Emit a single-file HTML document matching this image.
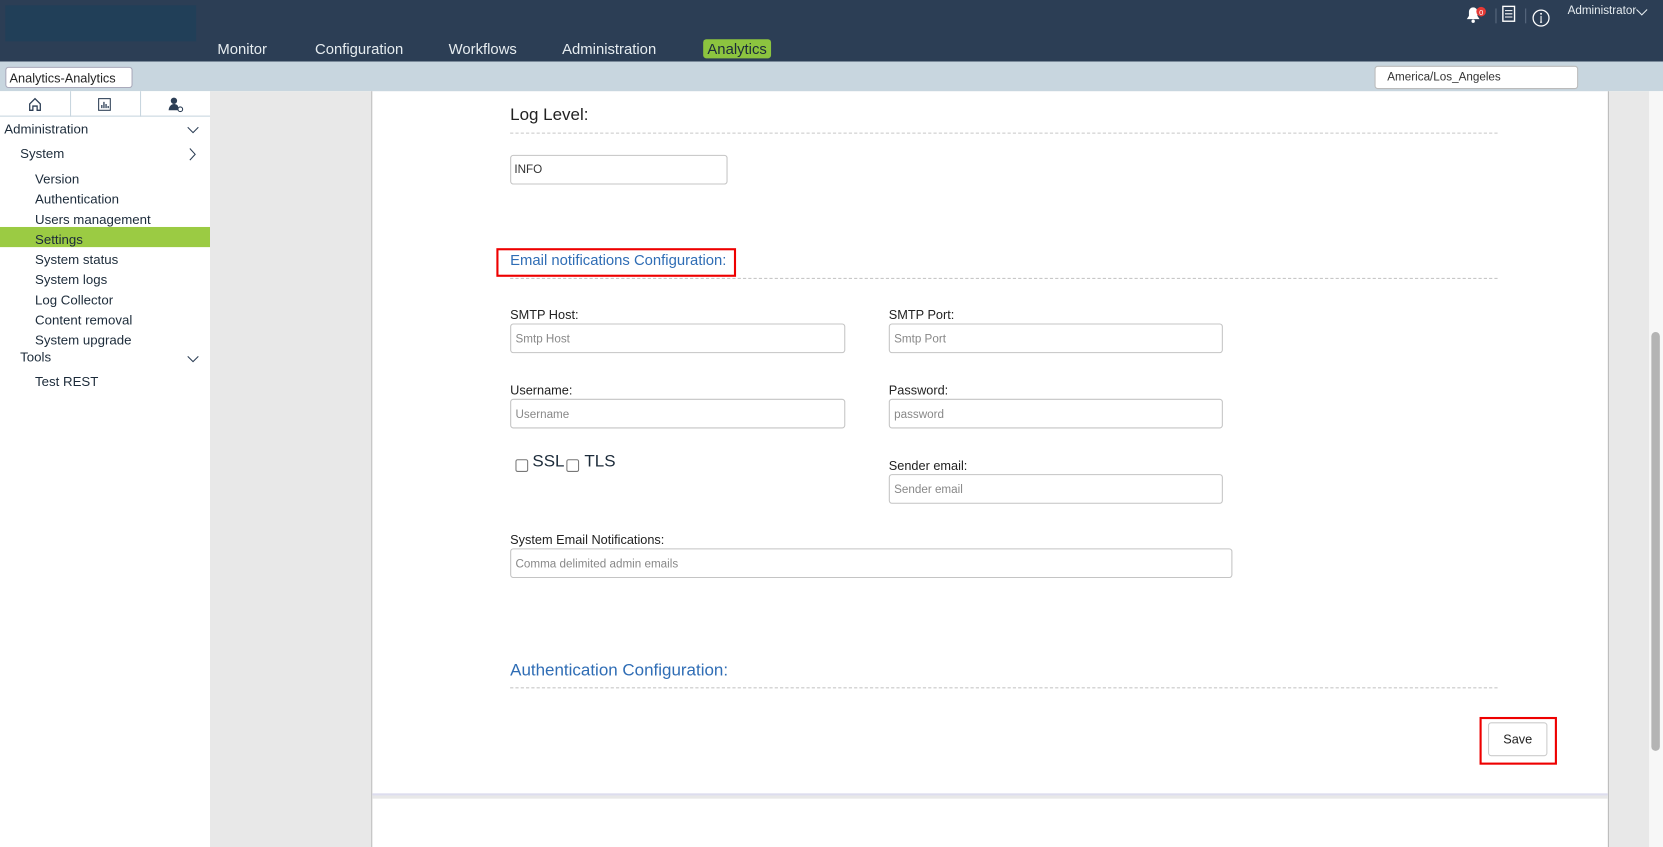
<!DOCTYPE html>
<html><head><meta charset="utf-8"><style>
*{box-sizing:border-box;margin:0;padding:0}
body{width:1663px;height:799px;overflow:hidden;background:#fff;font-family:"Liberation Sans",sans-serif;color:#222;position:relative}
#w{position:absolute;left:0;top:0;width:1568px;height:753px;transform:scale(1.0606);transform-origin:0 0}
.a{position:absolute}
.nav{color:#e6ecf0;font-size:14px;top:38px}
.side{font-size:12.5px;color:#1c2b3a}
.lbl{font-size:12px;color:#222}
.inp{position:absolute;border:1px solid #c4c4c4;border-radius:3px;height:28px;font-size:11px;color:#888;padding:8px 4px;background:#fff}
.dash{position:absolute;left:481px;width:931px;border-top:1px dashed #c8c8c8}
</style></head><body><div id="w">
<div class="a" style="left:0;top:0;width:1568px;height:58px;background:#2c3e55"></div>
<div class="a" style="left:5px;top:5px;width:180px;height:34px;background:#213f58"></div>
<div class="a nav" style="left:205px">Monitor</div>
<div class="a nav" style="left:297px">Configuration</div>
<div class="a nav" style="left:423px">Workflows</div>
<div class="a nav" style="left:530px">Administration</div>
<div class="a" style="left:663px;top:37px;width:64px;height:18px;background:#8cc43f;border-radius:3px;color:#1c2b3a;font-size:14px;text-align:center;line-height:18px">Analytics</div>
<svg class="a" style="left:1381px;top:4px" width="24" height="18"><path d="M2 14h12l-2-3V7a4 4 0 0 0-8 0v4z" fill="#fff"/><circle cx="8" cy="16" r="1.6" fill="#fff"/><circle cx="15.5" cy="7" r="4.5" fill="#e53935"/><text x="15.5" y="10" font-size="7" fill="#fff" text-anchor="middle" font-family="Liberation Sans">0</text></svg>
<div class="a" style="left:1410px;top:8px;width:1px;height:14px;background:#5a6b80"></div>
<svg class="a" style="left:1416px;top:5px" width="14" height="16"><rect x="1" y="1" width="11" height="14" fill="none" stroke="#fff" stroke-width="1.3"/><path d="M3 5h7M3 8h7M3 11h7" stroke="#fff"/></svg>
<div class="a" style="left:1438px;top:8px;width:1px;height:14px;background:#5a6b80"></div>
<svg class="a" style="left:1444px;top:8px" width="18" height="18"><circle cx="9" cy="9" r="7.5" fill="none" stroke="#fff" stroke-width="1.2"/><path d="M9 7v6M8 13h2" stroke="#fff"/><circle cx="9" cy="5" r="0.9" fill="#fff"/></svg>
<div class="a" style="left:1478px;top:4px;color:#e6ecf0;font-size:11px">Administrator</div>
<svg class="a" style="left:1542px;top:8px" width="12" height="8"><path d="M1 1l5 5 5-5" fill="none" stroke="#e6ecf0"/></svg>
<div class="a" style="left:0;top:58px;width:1568px;height:28px;background:#c8d6df"></div>
<div class="a" style="left:5px;top:63px;width:120px;height:20px;background:#fff;border:1px solid #aab;border-radius:3px;font-size:12px;padding:3px 3px;color:#222">Analytics-Analytics <span style="color:#999">&#8964;</span></div>
<div class="a" style="left:1296px;top:62px;width:192px;height:22px;background:#fff;border:1px solid #bbb;border-radius:3px;font-size:11px;padding:4px 11px;color:#333">America/Los_Angeles</div>
<div class="a" style="left:0;top:86px;width:198px;height:713px;background:#fff"></div>
<div class="a" style="left:0;top:86px;width:198px;height:24px;border-bottom:1px solid #c8d6df"></div>
<div class="a" style="left:66px;top:86px;width:1px;height:24px;background:#c8d6df"></div>
<div class="a" style="left:132px;top:86px;width:1px;height:24px;background:#c8d6df"></div>
<svg class="a" style="left:26px;top:91px" width="14" height="14"><path d="M2 7L7 2l5 5v6H9V9H5v4H2z" fill="none" stroke="#2c3e55" stroke-width="1.2"/></svg>
<svg class="a" style="left:92px;top:92px" width="14" height="13"><rect x="1" y="1" width="11" height="11" fill="none" stroke="#2c3e55"/><path d="M4 10V7M6 10V4M8 10V6M10 10V8" stroke="#2c3e55" stroke-width="1.2"/></svg>
<svg class="a" style="left:158px;top:91px" width="16" height="15"><circle cx="6" cy="4" r="3" fill="#2c3e55"/><path d="M1 13c0-4 3-6 5-6s4 1 4 3v3z" fill="#2c3e55"/><circle cx="12" cy="12" r="2.2" fill="none" stroke="#2c3e55"/></svg>
<div class="a side" style="left:4px;top:115px">Administration</div>
<svg class="a" style="left:176px;top:119px" width="12" height="8"><path d="M1 1l5 5 5-5" fill="none" stroke="#2c3e55"/></svg>
<div class="a side" style="left:19px;top:138px">System</div>
<svg class="a" style="left:178px;top:139px" width="8" height="13"><path d="M1 1l5 5.5L1 12" fill="none" stroke="#2c3e55"/></svg>
<div class="a" style="left:0;top:214px;width:198px;height:19px;background:#9bcb43"></div>
<div class="a side" style="left:33px;top:160px;line-height:19px">Version<br>Authentication<br>Users management<br>Settings<br>System status<br>System logs<br>Log Collector<br>Content removal<br>System upgrade</div>
<div class="a side" style="left:19px;top:330px">Tools</div>
<svg class="a" style="left:176px;top:335px" width="12" height="8"><path d="M1 1l5 5 5-5" fill="none" stroke="#2c3e55"/></svg>
<div class="a side" style="left:33px;top:353px">Test REST</div>
<div class="a" style="left:198px;top:86px;width:152px;height:713px;background:#e8e8e8"></div>
<div class="a" style="left:350px;top:86px;width:1px;height:713px;background:#bbb"></div>
<div class="a" style="left:1516px;top:86px;width:39px;height:713px;background:#e8e8e8;border-left:1px solid #bbb"></div>
<div class="a" style="left:1555px;top:86px;width:13px;height:713px;background:#f7f7f7"></div>
<div class="a" style="left:1557px;top:313px;width:8px;height:395px;background:#b4b4b4;border-radius:4px"></div>
<div class="a" style="left:351px;top:748px;width:1165px;height:2px;background:#dde"></div>
<div class="a" style="left:351px;top:750px;width:1165px;height:3px;background:#e8e8e8"></div>
<div class="a" style="left:481px;top:100px;font-size:16px;color:#222">Log Level:</div>
<div class="dash" style="top:125px"></div>
<div class="inp" style="left:481px;top:146px;width:205px;color:#333;padding:7px 3px">INFO</div>
<div class="a" style="left:468px;top:234px;width:226px;height:27px;border:2px solid #e00"></div>
<div class="a" style="left:481px;top:237px;font-size:14px;color:#2f6db5">Email notifications Configuration:</div>
<div class="dash" style="top:262px"></div>
<div class="a lbl" style="left:481px;top:290px">SMTP Host:</div>
<div class="inp" style="left:481px;top:305px;width:316px">Smtp Host</div>
<div class="a lbl" style="left:838px;top:290px">SMTP Port:</div>
<div class="inp" style="left:838px;top:305px;width:315px">Smtp Port</div>
<div class="a lbl" style="left:481px;top:361px">Username:</div>
<div class="inp" style="left:481px;top:376px;width:316px">Username</div>
<div class="a lbl" style="left:838px;top:361px">Password:</div>
<div class="inp" style="left:838px;top:376px;width:315px">password</div>
<div class="a" style="left:486px;top:433px;width:12px;height:12px;border:1px solid #777;border-radius:2px"></div>
<div class="a" style="left:502px;top:427px;font-size:16px;color:#1c2b3a">SSL</div>
<div class="a" style="left:534px;top:433px;width:12px;height:12px;border:1px solid #777;border-radius:2px"></div>
<div class="a" style="left:551px;top:427px;font-size:16px;color:#1c2b3a">TLS</div>
<div class="a lbl" style="left:838px;top:432px">Sender email:</div>
<div class="inp" style="left:838px;top:447px;width:315px">Sender email</div>
<div class="a lbl" style="left:481px;top:502px">System Email Notifications:</div>
<div class="inp" style="left:481px;top:517px;width:681px">Comma delimited admin emails</div>
<div class="a" style="left:481px;top:624px;font-size:16px;color:#2f6db5">Authentication Configuration:</div>
<div class="dash" style="top:648px"></div>
<div class="a" style="left:1395px;top:676px;width:73px;height:45px;border:2px solid #e00"></div>
<div class="a" style="left:1403px;top:681px;width:56px;height:32px;border:1px solid #ccc;border-radius:3px;font-size:12px;text-align:center;line-height:30px;color:#222">Save</div>
</div></body></html>
